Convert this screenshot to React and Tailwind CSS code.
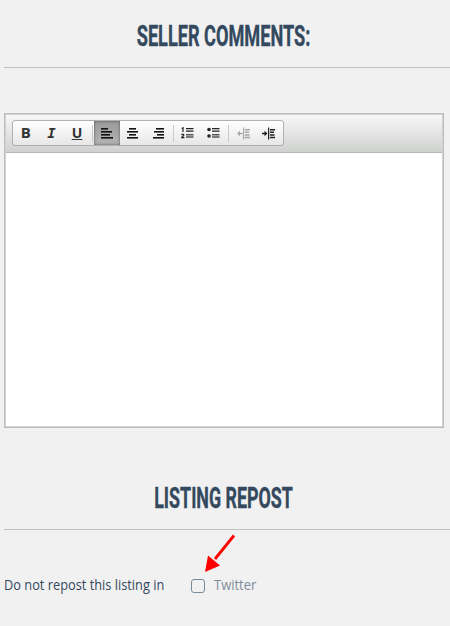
const lines = {
  left: [[0, 7], [0, 11], [0, 9], [0, 12]],
  center: [[3, 7], [1, 11], [3, 7], [1, 11]],
  right: [[4, 8], [2, 10], [5, 7], [1, 11]],
};

function Align({ kind }) {
  return (
    <svg width="12" height="11" viewBox="0 0 12 11" fill="#111">
      {lines[kind].map(([x, w], i) => (
        <rect key={i} x={x} y={i * 3} width={w} height="1.6" />
      ))}
    </svg>
  );
}

function List({ numbered }) {
  return (
    <svg width="13" height="12" viewBox="0 0 13 12" fill="#222">
      {numbered ? (
        <path d="M0.7 1.5L2 .8V5M0.3 7.7Q2.8 6.5 2.8 8.2L.7 10.6H3.4" fill="none" stroke="#222" strokeWidth="1.2" />
      ) : (
        <g>
          <circle cx="2" cy="2.5" r="1.8" />
          <circle cx="2" cy="9" r="1.8" />
        </g>
      )}
      <path d="M5 1h7.5v1.3H5zM5 3.4h7.5v1.3H5z" />
      <path d="M5 7h7.5v1.4H5zM5 9.3h7.5v1.4H5z" opacity=".75" />
    </svg>
  );
}

function Dent({ out }) {
  return (
    <svg width="13" height="13" viewBox="0 0 13 13" fill="#222" opacity={out ? 0.36 : 1}>
      <path d="M6 .5h1.2v12H6zM8 2h5v1.5H8zM8 4.6h4v1.5H8zM8 7.2h4.5v1.5H8zM8 9.8h5v1.5H8z" />
      {out ? <path d="M0 6.5L3 3.7V5.8h2.5v1.4H3v2.1z" /> : <path d="M5.5 6.5L2.5 3.7V5.8H0v1.4h2.5v2.1z" />}
    </svg>
  );
}

function Tool({ active, children }) {
  return (
    <div className={`flex h-6 w-[25.6px] shrink-0 items-center justify-center text-[#333] ${active ? "bg-linear-to-b from-[#999] to-[#b5b5b5] shadow-[inset_0_0_3px_#555]" : ""}`}>
      {children}
    </div>
  );
}

function Separator() {
  return <div className="mr-[1.2px] ml-[2px] h-[17px] w-px shrink-0 bg-[#c9c9c9]" />;
}

function Heading({ children, scale }) {
  return (
    <div className="flex h-10 items-center justify-center font-[Roboto] text-[30px] font-bold leading-10 whitespace-nowrap text-[#34495e] [-webkit-text-stroke:0.4px_#34495e]">
      <span className={scale}>{children}</span>
    </div>
  );
}

export default function App() {
  return (
    <div className="h-[626px] w-[450px] overflow-hidden bg-[#f1f1f1] px-1 pt-4 font-['Open_Sans',sans-serif]">
      <div className="h-[52px] w-[446px] border-b border-[#bdc3c7] pr-[7px]">
        <Heading scale="scale-x-[0.605]">SELLER COMMENTS:</Heading>
      </div>

      <div className="mt-[45px] h-[315px] w-[440px] border border-[#bdbdbd] bg-white p-px shadow-[inset_0_0_0_1px_#d2d2d2]">
        <div className="flex h-[38px] items-start border-b border-[#b6b6b6] bg-linear-to-b from-[#f7f7f7] to-[#cfd1cf] pt-[5px] pl-1.5">
          <div className="flex h-[26px] w-[272px] items-center rounded-[3px] border border-[#b0b0b0] bg-linear-to-b from-white to-[#e7e7e7]">
            <Tool><span className="-mt-px text-[15px] font-bold">B</span></Tool>
            <Tool><span className="font-['DejaVu_Sans_Mono'] text-[14px] font-bold italic">I</span></Tool>
            <Tool><span className="-mt-px text-[14px] font-bold underline decoration-1 underline-offset-1">U</span></Tool>
            <Separator />
            <Tool active><Align kind="left" /></Tool>
            <Tool><Align kind="center" /></Tool>
            <Tool><Align kind="right" /></Tool>
            <Separator />
            <Tool><List numbered /></Tool>
            <Tool><List /></Tool>
            <Separator />
            <Tool><Dent out /></Tool>
            <Tool><Dent /></Tool>
          </div>
        </div>
      </div>

      <div className="mt-[50px] h-[52px] w-[446px] border-b border-[#bdc3c7] pr-[7px]">
        <Heading scale="scale-x-[0.595]">LISTING REPOST</Heading>
      </div>

      <div className="relative flex pt-[43px] text-sm leading-6">
        <svg className="absolute top-[4px] left-[200px]" width="34" height="39" viewBox="0 0 34 39">
          <path d="M30 1.5L11 25" stroke="#f00" strokeWidth="2.8" />
          <path d="M1 38L4 21.5L16 31.5Z" fill="#f00" />
        </svg>
        <span className="w-[187px] origin-left scale-x-[0.914] whitespace-nowrap text-[#34495e]">Do not repost this listing in</span>
        <span className="mt-[6px] size-[14px] rounded-[3px] border border-[#7b8a9a]" />
        <span className="ml-[9px] origin-left scale-x-[0.925] text-[#7f8c9a]">Twitter</span>
      </div>
    </div>
  );
}
